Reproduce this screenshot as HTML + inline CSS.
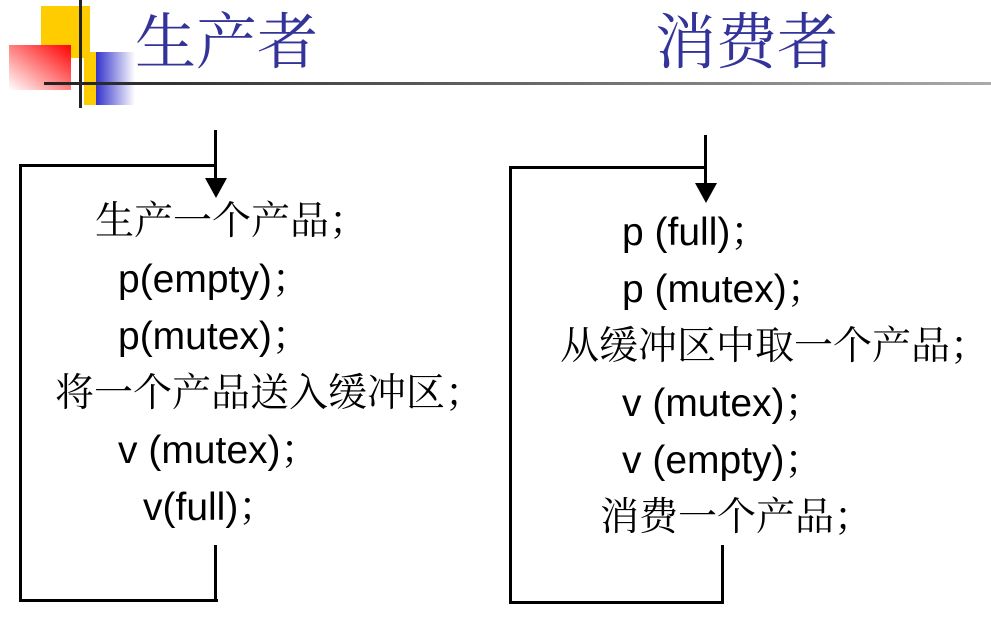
<!DOCTYPE html><html><head><meta charset="utf-8"><style>
body{margin:0;width:991px;height:635px;background:#fff;position:relative;overflow:hidden}
.a{position:absolute}
.t{position:absolute;font-family:"Liberation Sans","Noto Serif CJK SC",serif;font-size:39px;line-height:40px;color:#000;white-space:nowrap}
.h{position:absolute;font-family:"Noto Serif CJK SC",serif;font-size:61px;line-height:64px;color:#333399}
.l{position:absolute;background:#000}
</style></head><body>
<div class="a" style="left:41px;top:6px;width:49px;height:52px;background:#ffcc00"></div>
<div class="a" style="left:9px;top:45px;width:62px;height:45px;background:linear-gradient(to bottom left,#ff0000,#ffffff)"></div>
<div class="a" style="left:84px;top:52px;width:12px;height:53px;background:#ffcc00"></div>
<div class="a" style="left:96px;top:52px;width:39px;height:53px;background:linear-gradient(to right,#3333cc,#ffffff)"></div>
<div class="a" style="left:79px;top:0;width:3px;height:108px;background:#222"></div>
<div class="a" style="left:44px;top:82px;width:947px;height:3px;background:linear-gradient(to right,#222,#aaa)"></div>
<div class="h" style="left:135px;top:6px">生产者</div>
<div class="h" style="left:655px;top:6px">消费者</div>

<div class="l" style="left:19px;top:164px;width:197px;height:3px"></div>
<div class="l" style="left:19px;top:164px;width:3px;height:438px"></div>
<div class="l" style="left:19px;top:599px;width:199px;height:3px"></div>
<div class="l" style="left:214px;top:545px;width:3px;height:57px"></div>
<div class="l" style="left:214px;top:130px;width:3px;height:55px"></div>
<svg class="a" style="left:205px;top:178px" width="22" height="20"><polygon points="0,0 22,0 11,20" fill="#000"/></svg>

<div class="l" style="left:509px;top:166px;width:197px;height:3px"></div>
<div class="l" style="left:509px;top:166px;width:3px;height:438px"></div>
<div class="l" style="left:509px;top:601px;width:215px;height:3px"></div>
<div class="l" style="left:721px;top:545px;width:3px;height:59px"></div>
<div class="l" style="left:704px;top:135px;width:3px;height:55px"></div>
<svg class="a" style="left:695px;top:183px" width="22" height="20"><polygon points="0,0 22,0 11,20" fill="#000"/></svg>

<div class="t" style="left:95px;top:202px">生产一个产品；</div>
<div class="t" style="left:118px;top:260px">p(empty)；</div>
<div class="t" style="left:118px;top:317px">p(mutex)；</div>
<div class="t" style="left:55px;top:374px">将一个产品送入缓冲区；</div>
<div class="t" style="left:118px;top:431px">v (mutex)；</div>
<div class="t" style="left:143px;top:488px">v(full)；</div>

<div class="t" style="left:622px;top:213px">p (full)；</div>
<div class="t" style="left:622px;top:270px">p (mutex)；</div>
<div class="t" style="left:560px;top:327px">从缓冲区中取一个产品；</div>
<div class="t" style="left:622px;top:384px">v (mutex)；</div>
<div class="t" style="left:622px;top:441px">v (empty)；</div>
<div class="t" style="left:600px;top:498px">消费一个产品；</div>
</body></html>
